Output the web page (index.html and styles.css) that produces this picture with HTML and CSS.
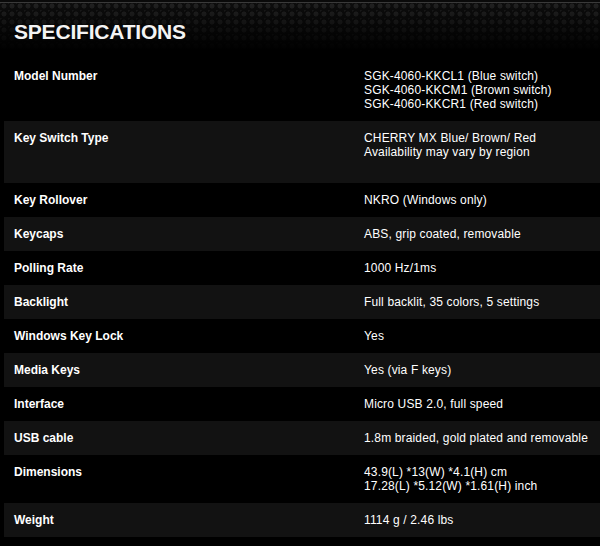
FILE: index.html
```html
<!DOCTYPE html>
<html>
<head>
<meta charset="utf-8">
<link rel="stylesheet" href="styles.css">
</head>
<body>
<div class="page">
  <header class="header">
    <h1 class="title">SPECIFICATIONS</h1>
  </header>
  <div class="specs">
    <div class="row">
      <div class="label">Model Number</div>
      <div class="value">SGK-4060-KKCL1 (Blue switch)<br>SGK-4060-KKCM1 (Brown switch)<br>SGK-4060-KKCR1 (Red switch)</div>
    </div>
    <div class="row alt tall">
      <div class="label">Key Switch Type</div>
      <div class="value">CHERRY MX Blue/ Brown/ Red<br>Availability may vary by region</div>
    </div>
    <div class="row">
      <div class="label">Key Rollover</div>
      <div class="value">NKRO (Windows only)</div>
    </div>
    <div class="row alt">
      <div class="label">Keycaps</div>
      <div class="value">ABS, grip coated, removable</div>
    </div>
    <div class="row">
      <div class="label">Polling Rate</div>
      <div class="value">1000 Hz/1ms</div>
    </div>
    <div class="row alt">
      <div class="label">Backlight</div>
      <div class="value">Full backlit, 35 colors, 5 settings</div>
    </div>
    <div class="row">
      <div class="label">Windows Key Lock</div>
      <div class="value">Yes</div>
    </div>
    <div class="row alt">
      <div class="label">Media Keys</div>
      <div class="value">Yes (via F keys)</div>
    </div>
    <div class="row">
      <div class="label">Interface</div>
      <div class="value">Micro USB 2.0, full speed</div>
    </div>
    <div class="row alt">
      <div class="label">USB cable</div>
      <div class="value">1.8m braided, gold plated and removable</div>
    </div>
    <div class="row">
      <div class="label">Dimensions</div>
      <div class="value">43.9(L) *13(W) *4.1(H) cm<br>17.28(L) *5.12(W) *1.61(H) inch</div>
    </div>
    <div class="row alt">
      <div class="label">Weight</div>
      <div class="value">1114 g / 2.46 lbs</div>
    </div>
  </div>
</div>
</body>
</html>
```

FILE: styles.css
```css
html, body {
  margin: 0;
  padding: 0;
  background: #000;
}
.page {
  width: 600px;
  height: 546px;
  background: #000;
  color: #fff;
  font-family: "Liberation Sans", Arial, sans-serif;
  overflow: hidden;
}
.header {
  height: 59px;
  box-sizing: border-box;
  padding: 20px 0 0 14px;
  border-top: 2px solid #0a0a0a;
  background:
    linear-gradient(to bottom, rgba(0,0,0,0) 0px, rgba(0,0,0,0.5) 24px, #000 48px),
    radial-gradient(circle at 4px 4px, #222 0 2.2px, rgba(0,0,0,0) 2.8px) 0 0 / 8px 8px,
    radial-gradient(circle at 0 0, #1c1c1c 0 1.4px, rgba(0,0,0,0) 2px) 0 0 / 8px 8px,
    #0d0d0d;
  box-shadow: inset 0 1px 0 #3a3a3a;
}
.title {
  margin: -2px 0 0 0;
  font-family: "Liberation Sans", Arial, sans-serif;
  font-weight: bold;
  font-size: 21px;
  line-height: 24px;
  letter-spacing: -0.2px;
  color: #f4f4f4;
}
.specs {
  padding-left: 4px;
}
.row {
  display: grid;
  grid-template-columns: 350px 1fr;
  padding: 10px 0 10px 10px;
  font-size: 12px;
  line-height: 14px;
}
.row.alt {
  background: #121212;
}
.row.tall {
  padding-bottom: 24px;
}
.label {
  font-weight: bold;
}
.value {
  font-weight: normal;
  letter-spacing: 0.15px;
}
```
